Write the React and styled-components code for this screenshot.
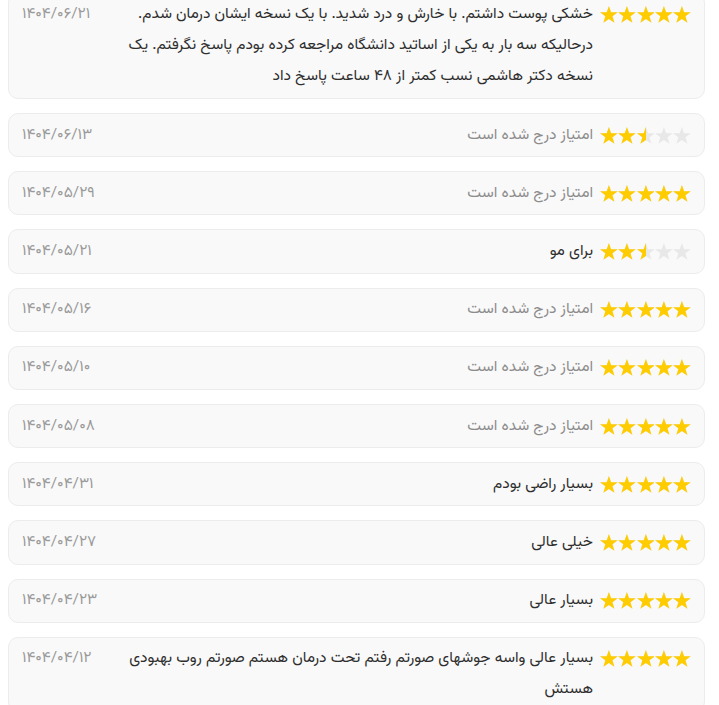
import React from 'react';
import styled, { createGlobalStyle } from 'styled-components';

const GlobalStyle = createGlobalStyle`
  * { box-sizing: border-box; }
  html, body {
    margin: 0;
    padding: 0;
    background: #fff;
    overflow: hidden;
  }
  body {
    font-family: "Vazirmatn", "DejaVu Sans", sans-serif;
  }
`;

const PLACEHOLDER = 'امتیاز درج شده است';

const reviews = [
  {
    rate: 5,
    text: 'خشکی پوست داشتم. با خارش و درد شدید. با یک نسخه ایشان درمان شدم. درحالیکه سه بار به یکی از اساتید دانشگاه مراجعه کرده بودم پاسخ نگرفتم. یک نسخه دکتر هاشمی نسب کمتر از ۴۸ ساعت پاسخ داد',
    date: '۱۴۰۴/۰۶/۲۱'
  },
  { rate: 2.5, text: '', date: '۱۴۰۴/۰۶/۱۳' },
  { rate: 5, text: '', date: '۱۴۰۴/۰۵/۲۹' },
  { rate: 2.5, text: 'برای مو', date: '۱۴۰۴/۰۵/۲۱' },
  { rate: 5, text: '', date: '۱۴۰۴/۰۵/۱۶' },
  { rate: 5, text: '', date: '۱۴۰۴/۰۵/۱۰' },
  { rate: 5, text: '', date: '۱۴۰۴/۰۵/۰۸' },
  { rate: 5, text: 'بسیار راضی بودم', date: '۱۴۰۴/۰۴/۳۱' },
  { rate: 5, text: 'خیلی عالی', date: '۱۴۰۴/۰۴/۲۷' },
  { rate: 5, text: 'بسیار عالی', date: '۱۴۰۴/۰۴/۲۳' },
  {
    rate: 5,
    text: 'بسیار عالی واسه جوشهای صورتم رفتم تحت درمان هستم صورتم روب بهبودی هستش',
    date: '۱۴۰۴/۰۴/۱۲'
  }
];

// star drawn edge to edge in a 20x19 box
const STAR = 'M10 0l2.45 6.9 7.55.15-6 4.55 2.2 7.3L10 14.6l-6.2 4.3 2.2-7.3-6-4.55 7.55-.15z';

const Star = ({ fill, id }) => (
  <StarSvg viewBox="0 0 20 19">
    <defs>
      <clipPath id={id}>
        <rect x="0" y="0" width={20 * fill} height="19" />
      </clipPath>
    </defs>
    <path d={STAR} fill="#e8e8e8" />
    {fill > 0 && <path d={STAR} fill="#ffcc00" clipPath={`url(#${id})`} />}
  </StarSvg>
);

const Stars = ({ rate, idx }) => (
  <StarRow>
    {[0, 1, 2, 3, 4].map((i) => (
      <Star key={i} id={`s${idx}-${i}`} fill={Math.max(0, Math.min(1, rate - i))} />
    ))}
  </StarRow>
);

export default function App() {
  return (
    <>
      <GlobalStyle />
      <List>
        {reviews.map((r, idx) => (
          <Card key={idx}>
            <Stars rate={r.rate} idx={idx} />
            <Comment $muted={!r.text}>{r.text || PLACEHOLDER}</Comment>
            <DateText>{r.date}</DateText>
          </Card>
        ))}
      </List>
    </>
  );
}

const List = styled.div`
  direction: rtl;
  display: flex;
  flex-direction: column;
  gap: 14px;
  padding: 0 14px 0 8px;
  margin-top: -7.2px;
`;

const Card = styled.div`
  display: flex;
  align-items: flex-start;
  gap: 7px;
  background: #f9f9f9;
  border: 1px solid #ececec;
  border-radius: 10px;
  padding: 5.6px 13px;
`;

const StarRow = styled.div`
  direction: ltr;
  display: flex;
  flex-shrink: 0;
  gap: 0.5px;
  height: 31px;
  align-items: center;
`;

const StarSvg = styled.svg`
  width: 17.8px;
  height: 17px;
  display: block;
`;

const Comment = styled.p`
  margin: 0;
  flex: 1;
  font-size: 15.5px;
  line-height: 31px;
  color: ${(p) => (p.$muted ? '#8c8c8c' : '#2e2e2e')};
  padding-left: 20px;
`;

const DateText = styled.span`
  direction: ltr;
  flex-shrink: 0;
  font-size: 15.5px;
  line-height: 30px;
  color: #9a9a9a;
`;
